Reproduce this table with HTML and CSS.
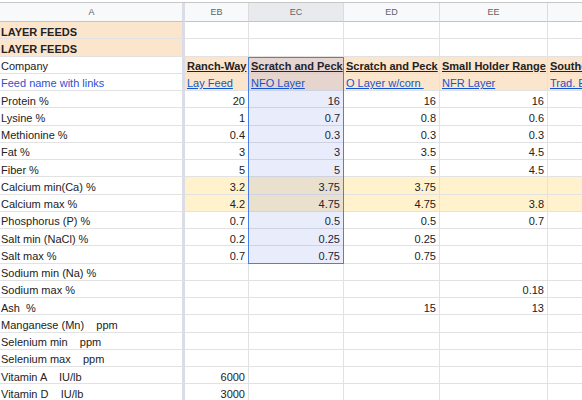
FILE: index.html
```html
<!DOCTYPE html>
<html>
<head>
<meta charset="utf-8">
<link rel="stylesheet" href="styles.css">
</head>
<body>
<div class="top"></div>
<div class="sheet">
  <div class="grid">
    <div class="hd ca">A</div><div class="hd">EB</div><div class="hd sel">EC</div><div class="hd">ED</div><div class="hd">EE</div><div class="hd last"></div>

    <div class="c ca peach b">LAYER FEEDS</div><div class="c"></div><div class="c"></div><div class="c"></div><div class="c"></div><div class="c"></div>
    <div class="c ca peach b">LAYER FEEDS</div><div class="c"></div><div class="c"></div><div class="c"></div><div class="c"></div><div class="c"></div>
    <div class="c ca">Company</div><div class="c peach b u">Ranch-Way</div><div class="c peach b u">Scratch and Peck</div><div class="c peach b u">Scratch and Peck</div><div class="c peach b u">Small Holder Range</div><div class="c peach b u">Southern</div>
    <div class="c ca blue">Feed name with links</div><div class="c peach link">Lay Feed</div><div class="c peach link">NFO Layer</div><div class="c peach link">O Layer w/corn&nbsp;</div><div class="c peach link">NFR Layer</div><div class="c peach link">Trad. Egg</div>

    <div class="c ca">Protein %</div><div class="c n">20</div><div class="c n">16</div><div class="c n">16</div><div class="c n">16</div><div class="c"></div>
    <div class="c ca">Lysine %</div><div class="c n">1</div><div class="c n">0.7</div><div class="c n">0.8</div><div class="c n">0.6</div><div class="c"></div>
    <div class="c ca">Methionine %</div><div class="c n">0.4</div><div class="c n">0.3</div><div class="c n">0.3</div><div class="c n">0.3</div><div class="c"></div>
    <div class="c ca">Fat %</div><div class="c n">3</div><div class="c n">3</div><div class="c n">3.5</div><div class="c n">4.5</div><div class="c"></div>
    <div class="c ca">Fiber %</div><div class="c n">5</div><div class="c n">5</div><div class="c n">5</div><div class="c n">4.5</div><div class="c"></div>
    <div class="c ca">Calcium min(Ca) %</div><div class="c n yel">3.2</div><div class="c n yel">3.75</div><div class="c n yel">3.75</div><div class="c n yel"></div><div class="c yel"></div>
    <div class="c ca">Calcium max %</div><div class="c n yel">4.2</div><div class="c n yel">4.75</div><div class="c n yel">4.75</div><div class="c n yel">3.8</div><div class="c yel"></div>
    <div class="c ca">Phosphorus (P) %</div><div class="c n">0.7</div><div class="c n">0.5</div><div class="c n">0.5</div><div class="c n">0.7</div><div class="c"></div>
    <div class="c ca">Salt min (NaCl) %</div><div class="c n">0.2</div><div class="c n">0.25</div><div class="c n">0.25</div><div class="c"></div><div class="c"></div>
    <div class="c ca">Salt max %</div><div class="c n">0.7</div><div class="c n">0.75</div><div class="c n">0.75</div><div class="c"></div><div class="c"></div>
    <div class="c ca">Sodium min (Na) %</div><div class="c"></div><div class="c"></div><div class="c"></div><div class="c"></div><div class="c"></div>
    <div class="c ca">Sodium max %</div><div class="c"></div><div class="c"></div><div class="c"></div><div class="c n">0.18</div><div class="c"></div>
    <div class="c ca">Ash  %</div><div class="c"></div><div class="c"></div><div class="c n">15</div><div class="c n">13</div><div class="c"></div>
    <div class="c ca">Manganese (Mn)    ppm</div><div class="c"></div><div class="c"></div><div class="c"></div><div class="c"></div><div class="c"></div>
    <div class="c ca">Selenium min    ppm</div><div class="c"></div><div class="c"></div><div class="c"></div><div class="c"></div><div class="c"></div>
    <div class="c ca">Selenium max    ppm</div><div class="c"></div><div class="c"></div><div class="c"></div><div class="c"></div><div class="c"></div>
    <div class="c ca">Vitamin A    IU/lb</div><div class="c n">6000</div><div class="c"></div><div class="c"></div><div class="c"></div><div class="c"></div>
    <div class="c ca">Vitamin D    IU/lb</div><div class="c n">3000</div><div class="c"></div><div class="c"></div><div class="c"></div><div class="c"></div>
    <div class="c ca"></div><div class="c"></div><div class="c"></div><div class="c"></div><div class="c"></div><div class="c"></div>
  </div>
  <div class="selection"></div>
</div>
</body>
</html>
```
FILE: styles.css
```css
html, body {
  margin: 0;
  padding: 0;
  background: #fff;
  overflow: hidden;
}
body {
  width: 582px;
  height: 400px;
  font-family: "Liberation Sans", Arial, sans-serif;
  font-size: 11px;
  color: #222;
}
.top {
  height: 2px;
  background: #fff;
  border-bottom: 1px solid #c7c7c7;
}
.sheet {
  position: relative;
}
.grid {
  display: grid;
  grid-template-columns: 185px 64px 95px 96px 108px 60px;
  grid-template-rows: 19px;
  grid-auto-rows: 17.25px;
}
.hd {
  background: #f8f9fa;
  color: #5f6368;
  font-size: 9px;
  display: flex;
  align-items: center;
  justify-content: center;
  border-right: 1px solid #dcdcdc;
  border-bottom: 1px solid #c4c4c4;
  box-sizing: border-box;
}
.hd.sel {
  background: #e8eaed;
}
.c {
  box-sizing: border-box;
  border-right: 1px solid #e2e2e2;
  border-bottom: 1px solid #e2e2e2;
  padding: 1.5px 3px 0 2px;
  white-space: pre;
  overflow: hidden;
  line-height: 16px;
}
.ca {
  border-right: 3px solid #dadce6;
  padding-left: 1px;
}
.hd.ca {
  border-right: 3px solid #dadce6;
}
.peach {
  background: #fce5cd;
}
.yel {
  background: #fff2cc;
}
.b {
  font-weight: bold;
}
.u {
  text-decoration: underline;
}
.blue {
  color: #3050d0;
}
.link {
  color: #1155cc;
  text-decoration: underline;
}
.n {
  text-align: right;
}
.selection {
  position: absolute;
  left: 248px;
  top: 53.5px;
  width: 96px;
  height: 207px;
  box-sizing: border-box;
  border: 1px solid #4a7ee8;
  background: rgba(40, 70, 220, 0.1);
  pointer-events: none;
}
```
